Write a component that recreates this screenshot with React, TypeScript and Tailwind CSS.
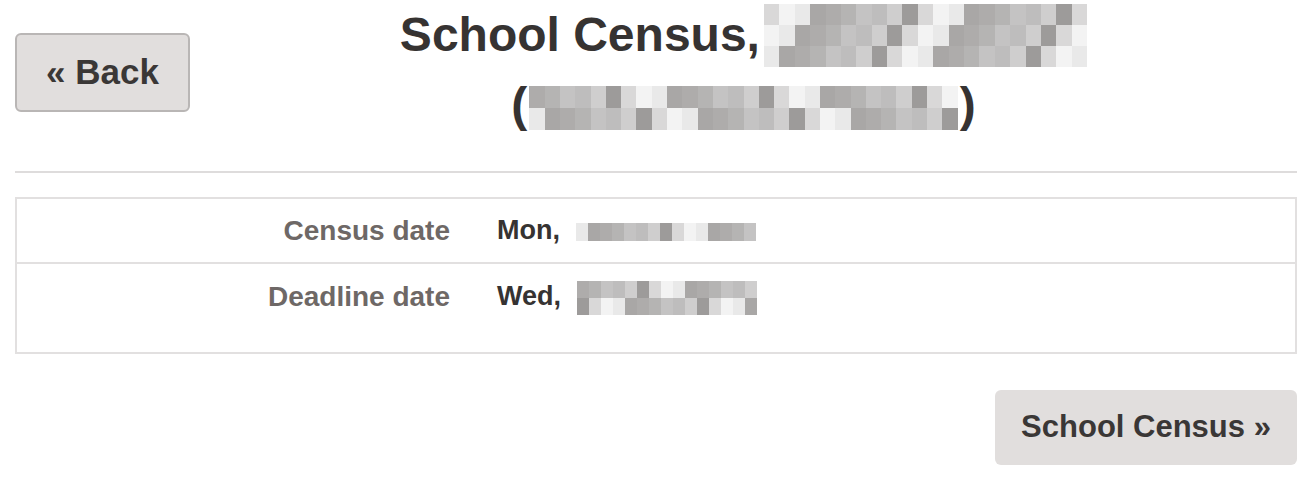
const FONT = "font-['Liberation_Sans',Arial,sans-serif]"

// redacted text, drawn as a coarse pixel mosaic
const SHADES = ['#d9d8d8', '#a9a7a6', '#c4c3c3', '#9d9b9a', '#e9e9e9', '#b5b4b3', '#cfcece', '#f3f3f3', '#aeacab', '#bebdbd']

function Mosaic({ cols, rows, cell, rowH, seed }: { cols: number; rows: number; cell: number; rowH: number; seed: number }) {
  const cells = []
  let s = seed
  for (let i = 0; i < cols * rows; i++) {
    s = (s * 9301 + 49297) % 233280
    cells.push(SHADES[s % SHADES.length])
  }
  return (
    <span
      className="inline-grid align-middle"
      style={{ gridTemplateColumns: `repeat(${cols}, ${cell}px)`, gridAutoRows: `${rowH}px` }}
    >
      {cells.map((c, i) => (
        <span key={i} style={{ background: c }} />
      ))}
    </span>
  )
}

const ROWS = [
  { label: 'Census date', day: 'Mon,', cols: 15, rows: 1, rowH: 18, seed: 7 },
  { label: 'Deadline date', day: 'Wed,', cols: 15, rows: 2, rowH: 17, seed: 31 },
]

export default function App() {
  return (
    <div className={`${FONT} px-[15px] pr-[17px] bg-white min-h-[484px]`}>
      {/* Header */}
      <div className="flex items-start">
        <button className="mt-[33px] w-[175px] h-[79px] shrink-0 rounded-[6px] border-2 border-[#b9b6b5] bg-[#e1dedd] text-[35px] font-bold text-[#3a3736]">
          « Back
        </button>
        <h1 className="flex-1 text-center text-[48px] leading-[70px] font-bold text-[#363332]">
          <span className="inline-flex items-center">
            School Census,
            <span className="ml-[4px] -mt-[6px]">
              <Mosaic cols={21} rows={3} cell={15.4} rowH={21} seed={3} />
            </span>
          </span>
          <br />
          <span className="inline-flex items-center">
            (
            <span className="mx-[2px]">
              <Mosaic cols={28} rows={2} cell={15.3} rowH={22} seed={11} />
            </span>
            )
          </span>
        </h1>
      </div>

      <hr className="mt-[31px] border-0 border-t-2 border-[#dedcdc]" />

      {/* Dates */}
      <div className="mt-[24px] border-2 border-[#e2e0e0] pb-[23px]">
        {ROWS.map((r, i) => (
          <div
            key={r.label}
            className={`flex items-center h-[65px] ${i === 0 ? 'border-b-2 border-[#e2e0e0]' : ''}`}
          >
            <div className="w-[433px] text-right text-[28px] font-bold text-[#6e6866]">{r.label}</div>
            <div className="ml-[47px] flex items-center text-[27px] font-bold text-[#363332]">
              {r.day}
              <span className="ml-[16px]">
                <Mosaic cols={r.cols} rows={r.rows} cell={12} rowH={r.rowH} seed={r.seed} />
              </span>
            </div>
          </div>
        ))}
      </div>

      <div className="flex justify-end mt-[36px]">
        <button className="w-[302px] h-[75px] rounded-[6px] bg-[#e1dedd] text-[31px] font-bold text-[#3a3736]">
          School Census »
        </button>
      </div>
    </div>
  )
}
